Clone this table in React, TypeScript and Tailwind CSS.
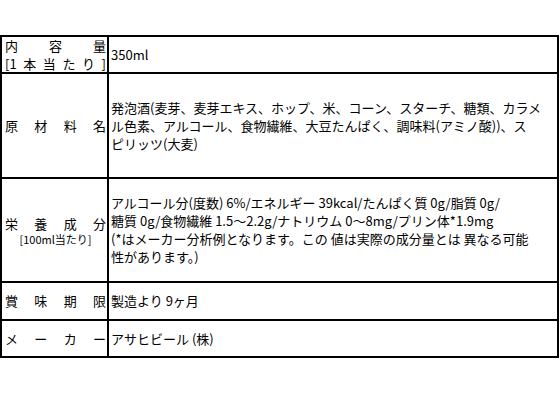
const jp = "font-['Noto_Sans_CJK_JP','Noto_Sans',sans-serif]";

function Label({ children }: { children: React.ReactNode }) {
  return (
    <div className="flex flex-col justify-center border-r-2 border-b-2 border-black pl-[3px] pr-[1px]">
      {children}
    </div>
  );
}

function Value({ lines }: { lines: string[] }) {
  return (
    <div className="flex flex-col justify-center overflow-hidden border-r-2 border-b-2 border-black pl-[2px]">
      {lines.map((l, i) => (
        <div key={i} className="whitespace-nowrap leading-[18px]">
          {l}
        </div>
      ))}
    </div>
  );
}

const justify = "leading-[18px] [text-align-last:justify] text-justify";

export default function App() {
  return (
    <div className={`min-h-[420px] w-[560px] bg-white pt-[35px] text-[13px] text-black ${jp}`}>
      <div className="grid w-[559px] grid-cols-[107px_450px] grid-rows-[37px_105px_104px_38px_37px] border-t-2 border-l-2 border-black">
        <Label>
          <div className={justify}>内容量</div>
          <div className={justify}>[1本当たり]</div>
        </Label>
        <Value lines={["350ml"]} />

        <Label>
          <div className={justify}>原材料名</div>
        </Label>
        <Value
          lines={[
            "発泡酒(麦芽、麦芽エキス、ホップ、米、コーン、スターチ、糖類、カラメ",
            "ル色素、アルコール、食物繊維、大豆たんぱく、調味料(アミノ酸))、ス",
            "ピリッツ(大麦)",
          ]}
        />

        <Label>
          <div className="leading-[17px] [text-align-last:justify] text-justify">栄養成分</div>
          <div className="text-center text-[11px] leading-[14px]">[100ml当たり]</div>
        </Label>
        <Value
          lines={[
            "アルコール分(度数) 6%/エネルギー 39kcal/たんぱく質 0g/脂質 0g/",
            "糖質 0g/食物繊維 1.5～2.2g/ナトリウム 0～8mg/プリン体*1.9mg",
            "(*はメーカー分析例となります。この 値は実際の成分量とは 異なる可能",
            "性があります。)",
          ]}
        />

        <Label>
          <div className={justify}>賞味期限</div>
        </Label>
        <Value lines={["製造より 9ヶ月"]} />

        <Label>
          <div className={justify}>メーカー</div>
        </Label>
        <Value lines={["アサヒビール (株)"]} />
      </div>
    </div>
  );
}
